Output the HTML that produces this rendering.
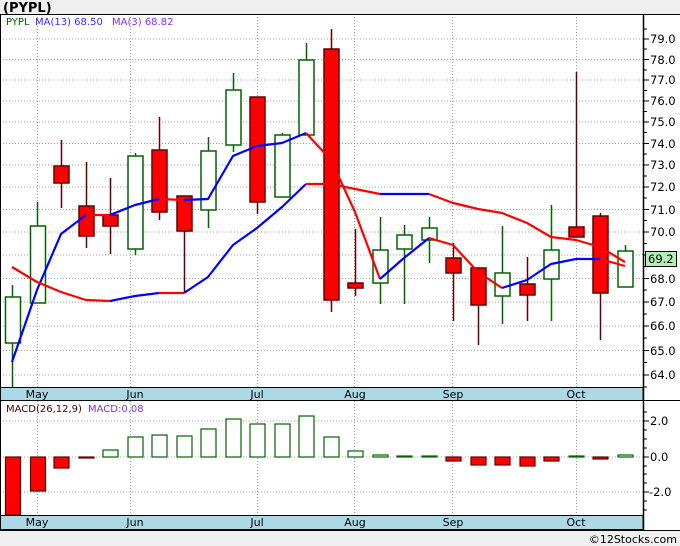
<!DOCTYPE html>
<html><head><meta charset="utf-8"><style>
body{margin:0;background:#f0f0f0;width:680px;height:546px;overflow:hidden;font-family:"Liberation Sans",sans-serif}
svg{display:block}
text{font-family:"DejaVu Sans","Liberation Sans",sans-serif}
</style></head><body>
<svg width="680" height="546" viewBox="0 0 680 546" xmlns="http://www.w3.org/2000/svg">
<rect x="0" y="0" width="680" height="546" fill="#f0f0f0"/>
<text x="3" y="12" font-size="13" font-weight="bold" font-family="Liberation Sans" fill="#000">(PYPL)</text>
<rect x="0" y="14" width="680" height="516" fill="#fff"/>
<g stroke="#a0a0a0" stroke-dasharray="1,2" stroke-width="1">
<line x1="0" x2="643" y1="39" y2="39"/><line x1="0" x2="643" y1="59.5" y2="59.5"/><line x1="0" x2="643" y1="80" y2="80"/><line x1="0" x2="643" y1="101" y2="101"/><line x1="0" x2="643" y1="122" y2="122"/><line x1="0" x2="643" y1="143.5" y2="143.5"/><line x1="0" x2="643" y1="165" y2="165"/><line x1="0" x2="643" y1="187" y2="187"/><line x1="0" x2="643" y1="209.5" y2="209.5"/><line x1="0" x2="643" y1="232" y2="232"/><line x1="0" x2="643" y1="255" y2="255"/><line x1="0" x2="643" y1="278.5" y2="278.5"/><line x1="0" x2="643" y1="302" y2="302"/><line x1="0" x2="643" y1="326" y2="326"/><line x1="0" x2="643" y1="350.5" y2="350.5"/><line x1="0" x2="643" y1="375" y2="375"/>
<line x1="0" x2="643" y1="421" y2="421"/><line x1="0" x2="643" y1="457" y2="457"/><line x1="0" x2="643" y1="492" y2="492"/>
<line x1="37.5" x2="37.5" y1="14" y2="515"/><line x1="130.5" x2="130.5" y1="14" y2="515"/><line x1="257.5" x2="257.5" y1="14" y2="515"/><line x1="354.5" x2="354.5" y1="14" y2="515"/><line x1="452.5" x2="452.5" y1="14" y2="515"/><line x1="576.5" x2="576.5" y1="14" y2="515"/>
</g>
<g stroke-width="1.5">
<g stroke="#006400">
<line x1="12.5" x2="12.5" y1="285" y2="387"/><line x1="37.5" x2="37.5" y1="202" y2="303"/><line x1="135.5" x2="135.5" y1="153" y2="255"/><line x1="208.5" x2="208.5" y1="137" y2="228"/><line x1="233.5" x2="233.5" y1="73" y2="152"/><line x1="282.5" x2="282.5" y1="133" y2="197"/><line x1="306.5" x2="306.5" y1="43" y2="135"/><line x1="380.5" x2="380.5" y1="217" y2="304"/><line x1="404.5" x2="404.5" y1="225" y2="304"/><line x1="429.5" x2="429.5" y1="217" y2="263"/><line x1="502.5" x2="502.5" y1="226" y2="324"/><line x1="551.5" x2="551.5" y1="205" y2="321"/><line x1="625.5" x2="625.5" y1="245" y2="287"/>
</g>
<g stroke="#600000">
<line x1="61.5" x2="61.5" y1="140" y2="208"/><line x1="86.5" x2="86.5" y1="162" y2="248"/><line x1="110.5" x2="110.5" y1="178" y2="254"/><line x1="159.5" x2="159.5" y1="117" y2="220"/><line x1="184.5" x2="184.5" y1="196" y2="292"/><line x1="257.5" x2="257.5" y1="97" y2="214"/><line x1="331.5" x2="331.5" y1="29" y2="312"/><line x1="355.5" x2="355.5" y1="229" y2="296"/><line x1="453.5" x2="453.5" y1="243" y2="321"/><line x1="478.5" x2="478.5" y1="268" y2="345"/><line x1="527.5" x2="527.5" y1="257" y2="321"/><line x1="576.5" x2="576.5" y1="72" y2="237"/><line x1="600.5" x2="600.5" y1="213" y2="340"/>
</g>
</g>
<g fill="#fff" stroke="#006400" stroke-width="1.5">
<rect x="5.5" y="297" width="15" height="46"/><rect x="30.5" y="226" width="15" height="77"/><rect x="128" y="156" width="15" height="93"/><rect x="201" y="151" width="15" height="59"/><rect x="226" y="90" width="15" height="55"/><rect x="275" y="135" width="15" height="62"/><rect x="299" y="60" width="15" height="75"/><rect x="373" y="250" width="15" height="33"/><rect x="397" y="235" width="15" height="14"/><rect x="422" y="228" width="15" height="12"/><rect x="495" y="273" width="15" height="23"/><rect x="544" y="250" width="15" height="29"/><rect x="618" y="251" width="15" height="36"/>
</g>
<g fill="#ff0000" stroke="#600000" stroke-width="1.5">
<rect x="54" y="166" width="15" height="17"/><rect x="79" y="206" width="15" height="30"/><rect x="103" y="215" width="15" height="11"/><rect x="152" y="150" width="15" height="62"/><rect x="177" y="196" width="15" height="35"/><rect x="250" y="97" width="15" height="105"/><rect x="324" y="49" width="15" height="251"/><rect x="348" y="283" width="15" height="5"/><rect x="446" y="258" width="15" height="15"/><rect x="471" y="268" width="15" height="37"/><rect x="520" y="284" width="15" height="11"/><rect x="569" y="227" width="15" height="10"/><rect x="593" y="216" width="15" height="77"/>
</g>
<g fill="none" stroke-width="2.2" stroke-linejoin="round">
<polyline stroke="#0000ff" points="12,362 37,290 61,234 86,215"/>
<polyline stroke="#ff0000" points="86,215 110,215"/>
<polyline stroke="#0000ff" points="110,215 135,205 159,199"/>
<polyline stroke="#ff0000" points="159,199 184,200"/>
<polyline stroke="#0000ff" points="184,200 208,199 233,156 257,146 282,143 306,133"/>
<polyline stroke="#ff0000" points="306,133 331,160 355,212 380,279"/>
<polyline stroke="#0000ff" points="380,279 404,258 429,238"/>
<polyline stroke="#ff0000" points="429,238 453,245 478,272 502,288"/>
<polyline stroke="#0000ff" points="502,288 527,280 551,264 576,259 600,259"/>
<polyline stroke="#ff0000" points="600,259 625,266"/>
<polyline stroke="#ff0000" points="12,267 37,282 61,292 86,300 110,301"/>
<polyline stroke="#0000ff" points="110,301 135,296 159,293"/>
<polyline stroke="#ff0000" points="159,293 184,293"/>
<polyline stroke="#0000ff" points="184,293 208,277 233,245 257,228 282,207 306,184"/>
<polyline stroke="#ff0000" points="306,184 331,184 355,189 380,194"/>
<polyline stroke="#0000ff" points="380,194 404,194 429,194"/>
<polyline stroke="#ff0000" points="429,194 453,203 478,209 502,213 527,223 551,237 576,240 600,247 625,262"/>
</g>
<g fill="#ff0000" stroke="#600000" stroke-width="1.2">
<rect x="5.5" y="457" width="15" height="58"/><rect x="30.5" y="457" width="15" height="34"/><rect x="54" y="457" width="15" height="11"/><rect x="79" y="457" width="15" height="1"/><rect x="446" y="457" width="15" height="4"/><rect x="471" y="457" width="15" height="8"/><rect x="495" y="457" width="15" height="8"/><rect x="520" y="457" width="15" height="9"/><rect x="544" y="457" width="15" height="4"/><rect x="593" y="457" width="15" height="2"/>
</g>
<g fill="#fff" stroke="#006400" stroke-width="1.2">
<rect x="103" y="450" width="15" height="7"/><rect x="128" y="437" width="15" height="20"/><rect x="152" y="435" width="15" height="22"/><rect x="177" y="436" width="15" height="21"/><rect x="201" y="429" width="15" height="28"/><rect x="226" y="419" width="15" height="38"/><rect x="250" y="424" width="15" height="33"/><rect x="275" y="424" width="15" height="33"/><rect x="299" y="416" width="15" height="41"/><rect x="324" y="437" width="15" height="20"/><rect x="348" y="451" width="15" height="6"/><rect x="373" y="455" width="15" height="2"/><rect x="397" y="456" width="15" height="1"/><rect x="422" y="456" width="15" height="1"/><rect x="569" y="456" width="15" height="1"/><rect x="618" y="455" width="15" height="2"/>
</g>
<text x="6" y="25" font-size="10" fill="#006400">PYPL</text>
<text x="35" y="25" font-size="10" fill="#3030ff">MA(13)  68.50</text>
<text x="112" y="25" font-size="10" fill="#8030ff">MA(3)  68.82</text>
<text x="6" y="412" font-size="10" fill="#400000">MACD(26,12,9)</text>
<text x="88" y="412" font-size="10" fill="#8030ff">MACD:0.08</text>
<rect x="0" y="387.5" width="643" height="13" fill="#add8e6" stroke="#000" stroke-width="1"/>
<rect x="0" y="515.5" width="643" height="14" fill="#add8e6" stroke="#000" stroke-width="1"/>
<g font-size="11" fill="#000" text-anchor="middle">
<text x="37" y="398">May</text><text x="135" y="398">Jun</text><text x="257" y="398">Jul</text><text x="355" y="398">Aug</text><text x="453" y="398">Sep</text><text x="576" y="398">Oct</text>
<text x="37" y="526">May</text><text x="135" y="526">Jun</text><text x="257" y="526">Jul</text><text x="355" y="526">Aug</text><text x="453" y="526">Sep</text><text x="576" y="526">Oct</text>
</g>
<line x1="0" x2="680" y1="14.5" y2="14.5" stroke="#000"/>
<line x1="0.5" x2="0.5" y1="14" y2="530" stroke="#000"/>
<line x1="643.5" x2="643.5" y1="14" y2="530" stroke="#000" stroke-width="1.5"/>
<line x1="0" x2="680" y1="530.5" y2="530.5" stroke="#000"/>
<line x1="643" x2="680" y1="400.5" y2="400.5" stroke="#000"/>
<g stroke="#000">
<line x1="643" x2="649" y1="39" y2="39"/><line x1="643" x2="649" y1="59.5" y2="59.5"/><line x1="643" x2="649" y1="80" y2="80"/><line x1="643" x2="649" y1="101" y2="101"/><line x1="643" x2="649" y1="122" y2="122"/><line x1="643" x2="649" y1="143.5" y2="143.5"/><line x1="643" x2="649" y1="165" y2="165"/><line x1="643" x2="649" y1="187" y2="187"/><line x1="643" x2="649" y1="209.5" y2="209.5"/><line x1="643" x2="649" y1="232" y2="232"/><line x1="643" x2="649" y1="255" y2="255"/><line x1="643" x2="649" y1="278.5" y2="278.5"/><line x1="643" x2="649" y1="302" y2="302"/><line x1="643" x2="649" y1="326" y2="326"/><line x1="643" x2="649" y1="350.5" y2="350.5"/><line x1="643" x2="649" y1="375" y2="375"/>
<line x1="643" x2="647" y1="29" y2="29"/><line x1="643" x2="647" y1="49" y2="49"/><line x1="643" x2="647" y1="70" y2="70"/><line x1="643" x2="647" y1="90.5" y2="90.5"/><line x1="643" x2="647" y1="111.5" y2="111.5"/><line x1="643" x2="647" y1="132.5" y2="132.5"/><line x1="643" x2="647" y1="154" y2="154"/><line x1="643" x2="647" y1="176" y2="176"/><line x1="643" x2="647" y1="198" y2="198"/><line x1="643" x2="647" y1="220.5" y2="220.5"/><line x1="643" x2="647" y1="243.5" y2="243.5"/><line x1="643" x2="647" y1="266.5" y2="266.5"/><line x1="643" x2="647" y1="290" y2="290"/><line x1="643" x2="647" y1="314" y2="314"/><line x1="643" x2="647" y1="338" y2="338"/><line x1="643" x2="647" y1="362.5" y2="362.5"/><line x1="643" x2="647" y1="387" y2="387"/>
<line x1="643" x2="649" y1="421" y2="421"/><line x1="643" x2="649" y1="457" y2="457"/><line x1="643" x2="649" y1="492" y2="492"/>
<line x1="643" x2="647" y1="412" y2="412"/><line x1="643" x2="647" y1="430" y2="430"/><line x1="643" x2="647" y1="439" y2="439"/><line x1="643" x2="647" y1="448" y2="448"/><line x1="643" x2="647" y1="466" y2="466"/><line x1="643" x2="647" y1="474" y2="474"/><line x1="643" x2="647" y1="483" y2="483"/><line x1="643" x2="647" y1="501" y2="501"/><line x1="643" x2="647" y1="510" y2="510"/>
</g>
<g font-size="11.5" fill="#000">
<text x="650" y="43">79.0</text><text x="650" y="64">78.0</text><text x="650" y="84">77.0</text><text x="650" y="105">76.0</text><text x="650" y="126">75.0</text><text x="650" y="148">74.0</text><text x="650" y="169">73.0</text><text x="650" y="191">72.0</text><text x="650" y="214">71.0</text><text x="650" y="236">70.0</text><text x="650" y="283">68.0</text><text x="650" y="306">67.0</text><text x="650" y="330">66.0</text><text x="650" y="355">65.0</text><text x="650" y="379">64.0</text>
<text x="650" y="425">2.0</text><text x="650" y="461">0.0</text><text x="649" y="496">-2.0</text>
</g>
<rect x="645.5" y="251.5" width="31" height="15" fill="#b0f0b0" stroke="#000"/>
<text x="648" y="263" font-size="11.5" fill="#000">69.2</text>
<text x="677" y="543" font-size="11" fill="#000" text-anchor="end">©12Stocks.com</text>
</svg>
</body></html>
